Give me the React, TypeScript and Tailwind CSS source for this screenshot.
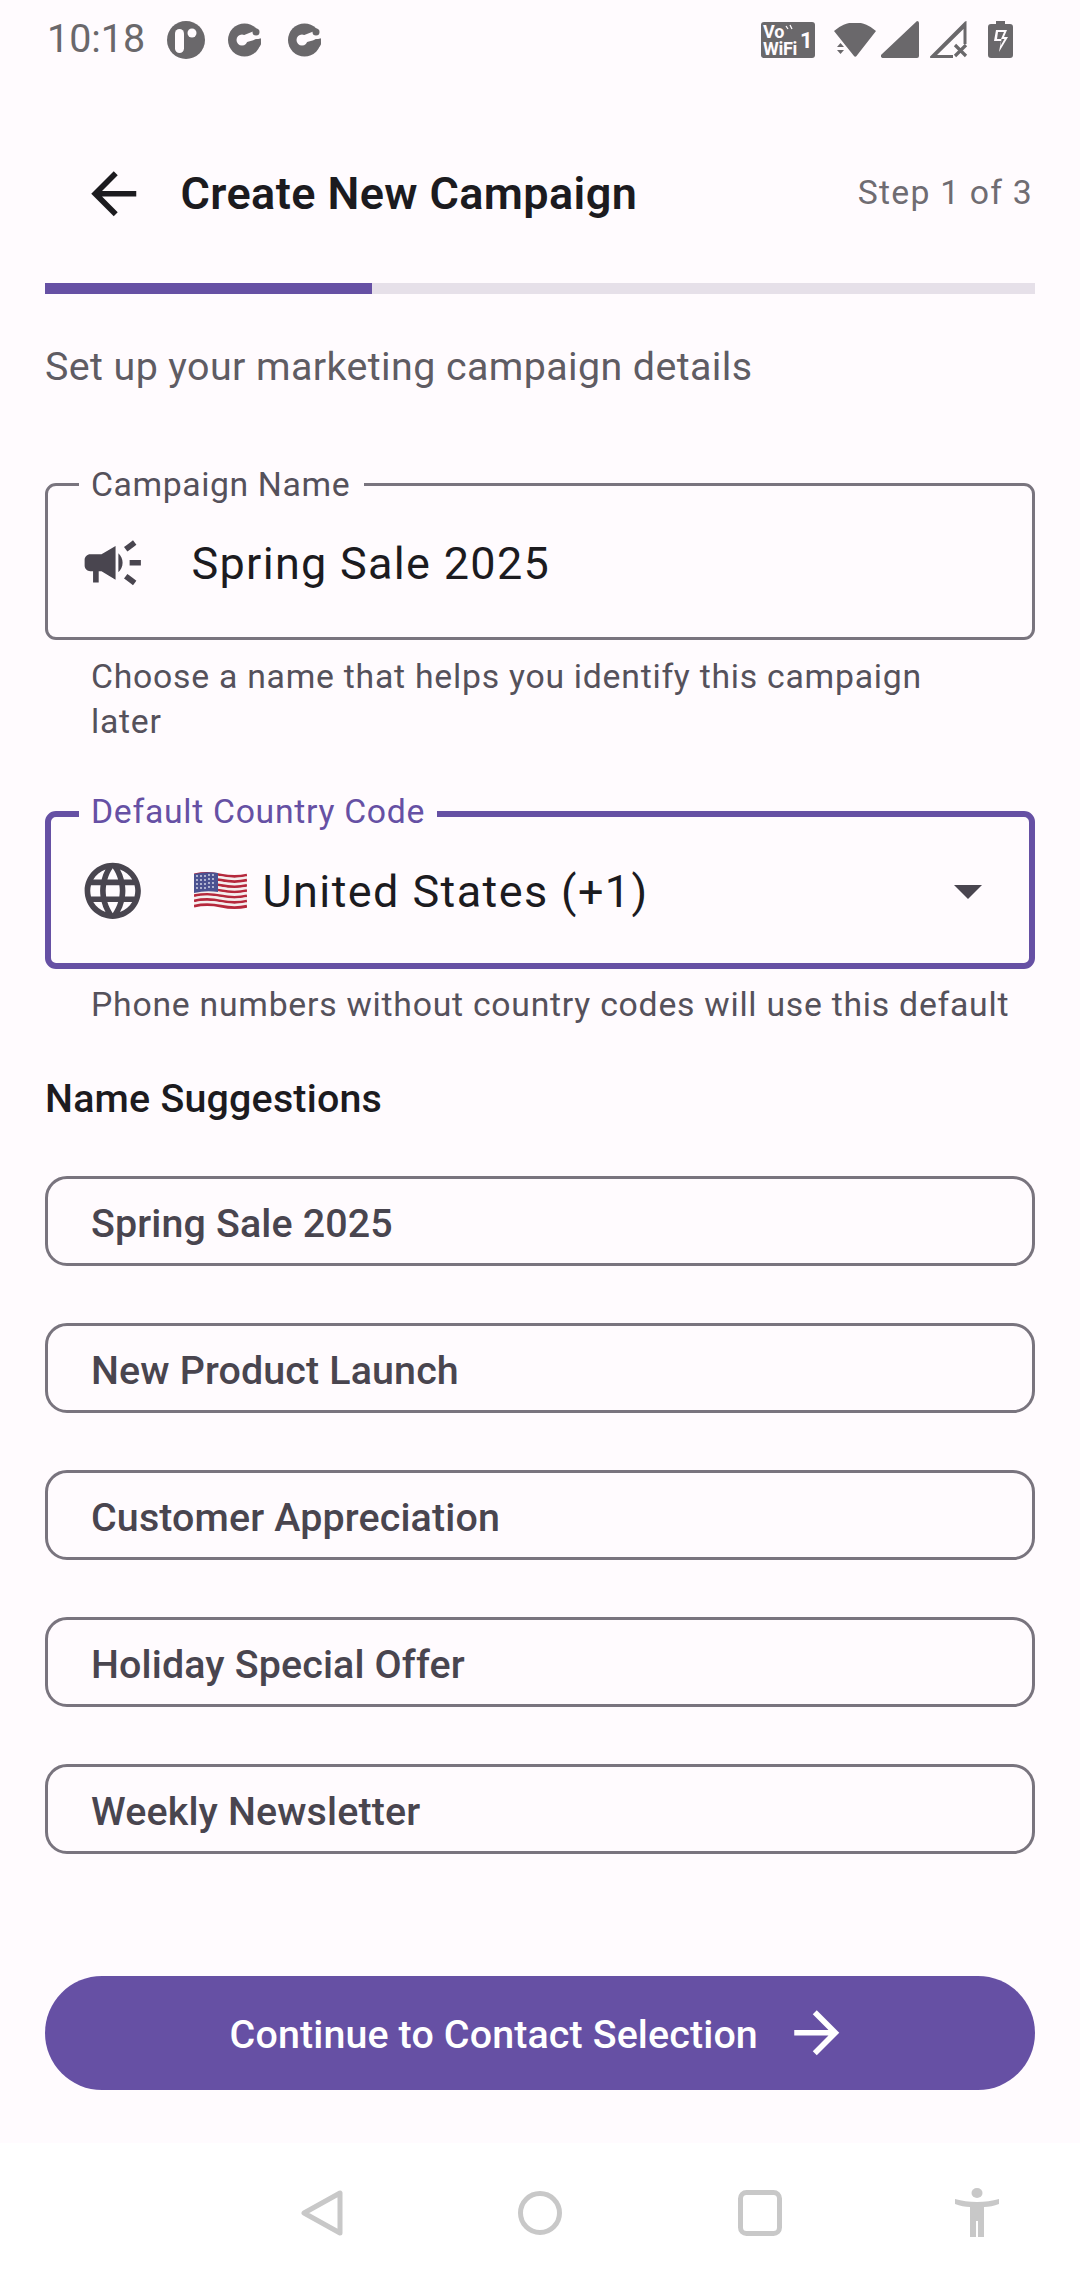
import React from 'react';

const font = { fontFamily: 'Roboto, sans-serif' };

function MdIcon({ d, className }: { d: string; className?: string }) {
  return (
    <svg viewBox="0 0 24 24" fill="currentColor" className={className}>
      <path d={d} />
    </svg>
  );
}

const ICON_CAMPAIGN =
  'M18 11v2h4v-2h-4zm-2 6.61c.96.71 2.21 1.65 3.2 2.39.4-.53.8-1.07 1.2-1.6-.99-.74-2.24-1.68-3.2-2.4-.4.54-.8 1.08-1.2 1.61zM20.4 5.6c-.4-.53-.8-1.07-1.2-1.6-.99.74-2.24 1.68-3.2 2.4.4.53.8 1.07 1.2 1.6.96-.72 2.21-1.65 3.2-2.4zM4 9c-1.1 0-2 .9-2 2v2c0 1.1.9 2 2 2h1v4h2v-4h1l5 3V6L8 9H4zm11.5 3c0-1.33-.58-2.53-1.5-3.35v6.69c.92-.81 1.5-2.01 1.5-3.34z';
const ICON_LANGUAGE =
  'M11.99 2C6.47 2 2 6.48 2 12s4.47 10 9.99 10C17.52 22 22 17.52 22 12S17.52 2 11.99 2zm6.93 6h-2.95c-.32-1.25-.78-2.45-1.38-3.56 1.84.63 3.37 1.91 4.33 3.56zM12 4.04c.83 1.2 1.48 2.53 1.91 3.96h-3.82c.43-1.43 1.08-2.76 1.91-3.96zM4.26 14C4.1 13.36 4 12.69 4 12s.1-1.36.26-2h3.38c-.08.66-.14 1.32-.14 2 0 .68.06 1.34.14 2H4.26zm.82 2h2.95c.32 1.25.78 2.45 1.38 3.56-1.84-.63-3.37-1.9-4.33-3.56zm2.95-8H5.08c.96-1.66 2.49-2.93 4.33-3.56C8.81 5.55 8.35 6.75 8.03 8zM12 19.96c-.83-1.2-1.48-2.53-1.91-3.96h3.82c-.43 1.43-1.08 2.76-1.91 3.96zM14.34 14H9.66c-.09-.66-.16-1.32-.16-2 0-.68.07-1.35.16-2h4.68c.09.65.16 1.32.16 2 0 .68-.07 1.34-.16 2zm.25 5.56c.6-1.11 1.06-2.31 1.38-3.56h2.95c-.96 1.65-2.49 2.93-4.33 3.56zM16.36 14c.08-.66.14-1.32.14-2 0-.68-.06-1.34-.14-2h3.38c.16.64.26 1.31.26 2s-.1 1.36-.26 2h-3.38z';
const ICON_BACK = 'M20 11H7.83l5.59-5.59L12 4l-8 8 8 8 1.41-1.41L7.83 13H20v-2z';
const ICON_FORWARD = 'M12 4l-1.41 1.41L16.17 11H4v2h12.17l-5.58 5.59L12 20l8-8z';

// waving flag, the picture uses the colour emoji
function Flag() {
  const stripes = [0, 1, 2, 3, 4, 5, 6, 7, 8, 9, 10, 11, 12];
  return (
    <svg viewBox="0 0 53 39" className="w-[53px] h-[39px] shrink-0">
      {stripes.map((i) => (
        <path
          key={i}
          d={`M0 ${3 + i * 2.6} q13 -3 27 0 t26 0`}
          fill="none"
          stroke={i % 2 === 0 ? '#b5283c' : '#f4eeee'}
          strokeWidth="2.8"
        />
      ))}
      <path d="M0 2 q13 -3 24 -1 V20 q-12 -2 -24 1z" fill="#4b5291" />
      {[4, 8, 12, 16].map((y) =>
        [3, 7, 11, 15, 19].map((x) => (
          <circle key={`${x}-${y}`} cx={x} cy={y - (x > 12 ? 1 : 0)} r="0.9" fill="#dfe0ee" />
        )),
      )}
    </svg>
  );
}

function NotifC({ className }: { className: string }) {
  return (
    <svg viewBox="0 0 33 34" className={className}>
      <circle cx="16.5" cy="17" r="16.5" fill="currentColor" />
      <circle cx="14" cy="17" r="5.5" fill="#fffbfe" />
      <path d="M15 12.500L34 5v10l-15 4z" fill="#fffbfe" />
      <circle cx="28" cy="9" r="3.500" fill="currentColor" />
      <circle cx="29" cy="20" r="4" fill="currentColor" />
    </svg>
  );
}

function StatusBar() {
  return (
    <div className="h-[80px] flex items-start text-[#6a686b]">
      <span className="ml-[47px] mt-[18px] text-[39.4px] leading-[42px]">10:18</span>
      <svg viewBox="0 0 38 38" className="ml-[22px] mt-[21px] w-[38px] h-[38px]">
        <circle cx="19" cy="19" r="19" fill="currentColor" />
        <rect x="8" y="8" width="9" height="24" rx="4.500" fill="#fffbfe" />
        <circle cx="25" cy="12" r="4.500" fill="#fffbfe" />
      </svg>
      <NotifC className="ml-[23px] mt-[23px] w-[33px] h-[34px]" />
      <NotifC className="ml-[27px] mt-[23px] w-[33px] h-[34px]" />
      <div className="ml-[440px] mt-[22px] w-[54px] h-[36px] rounded-[3px] bg-current flex items-center relative">
        <span className="ml-[2px] text-[18px] leading-[17px] font-bold tracking-[-0.3px] text-[#fffbfe]">
          Vo
          <br />
          WiFi
        </span>
        <span className="ml-[3px] mt-[1px] text-[22px] leading-[24px] font-bold text-[#fffbfe]">1</span>
        <svg viewBox="0 0 10 8" className="absolute left-[24px] top-[2px] w-[10px] h-[8px]">
          <path d="M1 2l2 3M5 1l2 4" stroke="#fffbfe" strokeWidth="1.300" fill="none" />
        </svg>
      </div>
      <svg viewBox="0 0 42 34" className="ml-[19px] mt-[23px] w-[42px] h-[34px]">
        <path d="M0 8a30 30 0 0 1 42 0L22.500 33a1.500 1.500 0 0 1-2.500 0z" fill="currentColor" />
        <path d="M3 24l3.500-4 3.500 4zM3 27l3.500 4 3.500-4z" fill="currentColor" />
      </svg>
      <svg viewBox="0 0 38 37" className="ml-[5px] mt-[21px] w-[38px] h-[37px]">
        <path d="M36 0a2 2 0 0 1 2 2v33a2 2 0 0 1-2 2H2a2 2 0 0 1-1.500-3.500z" fill="currentColor" />
      </svg>
      <svg viewBox="0 0 38 37" className="ml-[11px] mt-[21px] w-[38px] h-[37px]">
        <path d="M36.500 0v23h-3V8L7 34h16v3H1a1 1 0 0 1-.7-1.700L35 .4z" fill="currentColor" />
        <path d="M25 24l11 11m0-11L25 35" stroke="currentColor" strokeWidth="3.200" fill="none" />
      </svg>
      <svg viewBox="0 0 25 37" className="ml-[20px] mt-[21px] w-[25px] h-[37px]">
        <path d="M8 0h9v3h5a3 3 0 0 1 3 3v28a3 3 0 0 1-3 3H3a3 3 0 0 1-3-3V6a3 3 0 0 1 3-3h5z" fill="currentColor" />
        <path d="M8 9h11l-3 7h4l-9 15 2-11H6z" fill="#fffbfe" />
        <path d="M10 11h6l-3 7h3.500l-4 7 1-7H9z" fill="currentColor" />
      </svg>
    </div>
  );
}

function OutlinedField({
  label,
  focused,
  icon,
  children,
}: {
  label: string;
  focused?: boolean;
  icon: string;
  children: React.ReactNode;
}) {
  return (
    <div
      className={
        focused
          ? 'relative h-[158px] mx-[45px] rounded-[11px] border-[6px] border-[#6650a4] flex items-center'
          : 'relative h-[157px] mx-[45px] rounded-[11px] border-[3px] border-[#79747e] flex items-center'
      }
    >
      <span
        className={
          focused
            ? 'absolute left-[28px] -top-[26px] h-[42px] px-[12px] bg-[#fffbfe] text-[33.75px] leading-[42px] tracking-[0.7px] text-[#6650a4]'
            : 'absolute left-[31px] -top-[22px] h-[42px] pl-[12px] pr-[14px] bg-[#fffbfe] text-[33.75px] leading-[42px] tracking-[0.6px] text-[#55515b]'
        }
      >
        {label}
      </span>
      <MdIcon
        d={icon}
        className={
          focused
            ? 'ml-[28px] mt-[2px] w-[67.5px] h-[67.5px] text-[#49454f] shrink-0'
            : 'ml-[31px] mt-[2px] w-[67.5px] h-[67.5px] text-[#49454f] shrink-0'
        }
      />
      {children}
    </div>
  );
}

function Helper({ children }: { children: React.ReactNode }) {
  return <p className="ml-[91px] text-[33.75px] leading-[45px] tracking-[0.75px] text-[#55515b]">{children}</p>;
}

function SuggestionChip({ label }: { label: string }) {
  return (
    <div className="h-[90px] mx-[45px] rounded-[22px] border-[3px] border-[#79747e] flex items-center pl-[43px] pt-[5px] text-[39.4px] font-medium tracking-[0.14px] text-[#49454f]">
      {label}
    </div>
  );
}

const suggestions = [
  'Spring Sale 2025',
  'New Product Launch',
  'Customer Appreciation',
  'Holiday Special Offer',
  'Weekly Newsletter',
];

export default function App() {
  return (
    <div className="w-[1080px] h-[2280px] overflow-hidden bg-[#fffbfe] flex flex-col" style={font}>
      <StatusBar />

      <div className="h-[203px] pt-[24px] flex items-center shrink-0">
        <MdIcon d={ICON_BACK} className="ml-[80px] w-[67.5px] h-[67.5px] text-[#1c1b1f]" />
        <h1 className="ml-[33px] text-[45px] font-semibold tracking-[0.4px] text-[#1c1b1f]">Create New Campaign</h1>
        <span className="ml-auto mr-[47px] text-[33.75px] tracking-[1.2px] text-[#6f6c72]">Step 1 of 3</span>
      </div>

      <div className="mx-[45px] h-[11px] bg-[#e6e0e9] shrink-0">
        <div className="h-full w-[327px] bg-[#6650a4]" />
      </div>

      <p className="mt-[39px] ml-[45px] text-[39.4px] leading-[68px] tracking-[0.4px] text-[#5f5c63]">
        Set up your marketing campaign details
      </p>

      <div className="mt-[82px]">
        <OutlinedField label="Campaign Name" icon={ICON_CAMPAIGN}>
          <span className="ml-[45px] pt-[5px] text-[45px] tracking-[1.3px] text-[#1c1b1f]">Spring Sale 2025</span>
        </OutlinedField>
      </div>
      <div className="mt-[14px]">
        <Helper>
          Choose a name that helps you identify this campaign
          <br />
          later
        </Helper>
      </div>

      <div className="mt-[67px]">
        <OutlinedField label="Default Country Code" focused icon={ICON_LANGUAGE}>
          <div className="ml-[47px] pt-[3px] flex items-center gap-[16px]">
            <Flag />
            <span className="text-[45px] tracking-[1.4px] text-[#1c1b1f]">United States (+1)</span>
          </div>
          <svg viewBox="0 0 10 5" fill="currentColor" className="absolute right-[47px] top-[68px] w-[28px] h-[14px] text-[#49454f]">
            <path d="M0 0l5 5 5-5z" />
          </svg>
        </OutlinedField>
      </div>
      <div className="mt-[13px]">
        <Helper>Phone numbers without country codes will use this default</Helper>
      </div>

      <h2 className="mt-[44px] ml-[45px] text-[39.4px] leading-[56px] font-medium tracking-[0.2px] text-[#1c1b1f]">
        Name Suggestions
      </h2>

      <div className="mt-[49px] flex flex-col gap-[57px]">
        {suggestions.map((s) => (
          <SuggestionChip key={s} label={s} />
        ))}
      </div>

      <button className="mt-[122px] mx-[45px] h-[114px] rounded-full bg-[#6650a4] text-white flex items-center justify-center gap-[25px] shrink-0">
        <span className="text-[39.4px] font-medium tracking-[0.13px] pt-[4px]">Continue to Contact Selection</span>
        <MdIcon d={ICON_FORWARD} className="w-[67.5px] h-[67.5px]" />
      </button>

      <div className="mt-[53px] flex-1 bg-white text-[#c8c8c8] flex items-start">
        <svg viewBox="0 0 42 46" className="ml-[301px] mt-[47px] w-[42px] h-[46px]">
          <path d="M39 3v40L3 23z" fill="none" stroke="currentColor" strokeWidth="5" strokeLinejoin="round" />
        </svg>
        <svg viewBox="0 0 44 46" className="ml-[175px] mt-[47px] w-[44px] h-[46px]">
          <circle cx="22" cy="23" r="19.500" fill="none" stroke="currentColor" strokeWidth="5" />
        </svg>
        <svg viewBox="0 0 44 46" className="ml-[176px] mt-[47px] w-[44px] h-[46px]">
          <rect x="2.500" y="2.500" width="39" height="41" rx="6" fill="none" stroke="currentColor" strokeWidth="5" />
        </svg>
        <svg viewBox="0 0 44 49" className="ml-[173px] mt-[45px] w-[44px] h-[49px]" fill="currentColor">
          <ellipse cx="22" cy="5" rx="5.500" ry="5" />
          <path d="M0 11c7 2 14 3 22 3s15-1 22-3v5c-5 2-10 3-15 3v30h-6V33h-2v16h-6V19c-5 0-10-1-15-3z" />
        </svg>
      </div>
    </div>
  );
}
